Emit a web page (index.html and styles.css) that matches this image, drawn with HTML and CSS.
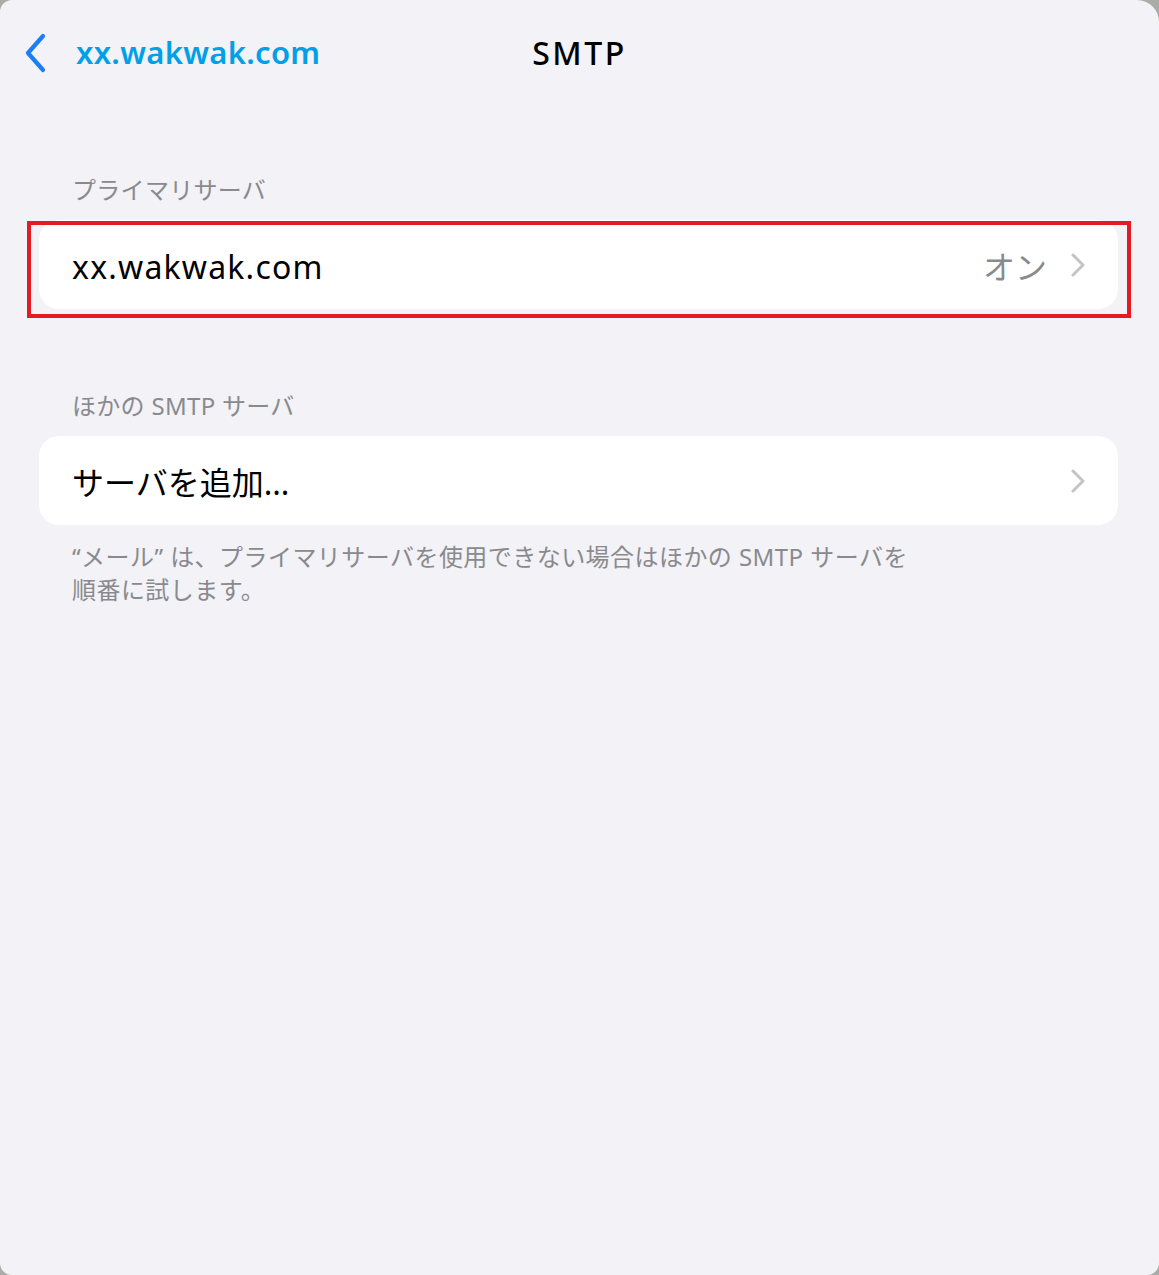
FILE: index.html
```html
<!DOCTYPE html>
<html lang="ja">
<head>
    <meta charset="UTF-8">
    <meta name="viewport" content="width=device-width, initial-scale=1.0">
    <title>SMTP</title>
    <link rel="stylesheet" href="styles.css">
</head>
<body>

    <div class="screen">
        <!-- ナビゲーションバー -->
        <div class="navbar">
            <a class="back" href="#">
                <svg class="back-icon" width="26" height="40" viewBox="0 0 26 40">
                    <polyline points="19,3 4,20 19,37" fill="none" stroke="#1c7ef4" stroke-width="4.2" stroke-linecap="round" stroke-linejoin="round"/>
                </svg>
                <span>xx.wakwak.com</span>
            </a>
            <div class="title">SMTP</div>
        </div>

        <!-- プライマリサーバ -->
        <div class="section section-first">
            <div class="section-header">プライマリサーバ</div>
            <div class="card">
                <div class="row">
                    <span class="row-label host">xx.wakwak.com</span>
                    <span class="row-value">オン</span>
                    <svg class="chevron" width="14" height="24" viewBox="0 0 14 24">
                        <polyline points="2,2 12,12 2,22" fill="none" stroke="#c4c4c7" stroke-width="3" stroke-linecap="round" stroke-linejoin="round"/>
                    </svg>
                </div>
                <div class="mark"></div>
            </div>
        </div>

        <!-- ほかのSMTPサーバ -->
        <div class="section">
            <div class="section-header">ほかの SMTP サーバ</div>
            <div class="card">
                <div class="row">
                    <span class="row-label">サーバを追加...</span>
                    <svg class="chevron" width="14" height="24" viewBox="0 0 14 24">
                        <polyline points="2,2 12,12 2,22" fill="none" stroke="#c4c4c7" stroke-width="3" stroke-linecap="round" stroke-linejoin="round"/>
                    </svg>
                </div>
            </div>
            <div class="section-footer">“メール” は、プライマリサーバを使用できない場合はほかの SMTP サーバを<br>順番に試します。</div>
        </div>
    </div>

</body>
</html>
```

FILE: styles.css
```css
body {
    margin: 0;
    background-color: #aaaca7;
    font-family: "Noto Sans", "Noto Sans CJK JP", sans-serif;
}
.screen {
    height: 1275px;
    background-color: #f2f2f7;
    border-radius: 12px 22px 12px 12px;
    overflow: hidden;
}
.navbar {
    position: relative;
    height: 106px;
    display: flex;
    align-items: center;
    justify-content: center;
}
.back {
    position: absolute;
    left: 24px;
    top: 33px;
    display: flex;
    align-items: center;
    gap: 26px;
    color: #00a0e9;
    text-decoration: none;
    font-size: 31px;
    font-weight: 600;
    letter-spacing: 0.3px;
}
.back span {
    margin-top: -2px;
}
.title {
    font-size: 32px;
    font-weight: 500;
    color: #000;
    letter-spacing: 2.5px;
    margin-top: -2px;
}
.section {
    padding: 0 41px 0 39px;
    margin-top: 81px;
}
.section-first {
    margin-top: 68px;
}
.section-header {
    color: #8a8a8e;
    font-size: 24px;
    line-height: 32px;
    letter-spacing: 0.3px;
    padding: 0 0 14px 33px;
}
.card {
    position: relative;
    background-color: #fff;
    border-radius: 20px;
}
.row {
    display: flex;
    align-items: center;
    height: 89px;
    padding: 0 33px 0 33px;
}
.row-label {
    flex: 1;
    font-size: 32px;
    color: #000;
}
.row-label.host {
    letter-spacing: 1.2px;
    margin-top: 3px;
}
.row-value {
    font-size: 32px;
    color: #8a8a8e;
    margin-right: 24px;
}
.chevron {
    display: block;
}
/* 赤枠 */
.mark {
    position: absolute;
    left: -12px;
    right: -13px;
    top: 1px;
    bottom: -9px;
    border: 4px solid #e41b23;
}
.section-footer {
    color: #8a8a8e;
    font-size: 24px;
    line-height: 33px;
    letter-spacing: 0.45px;
    padding: 15px 0 0 33px;
}
```
